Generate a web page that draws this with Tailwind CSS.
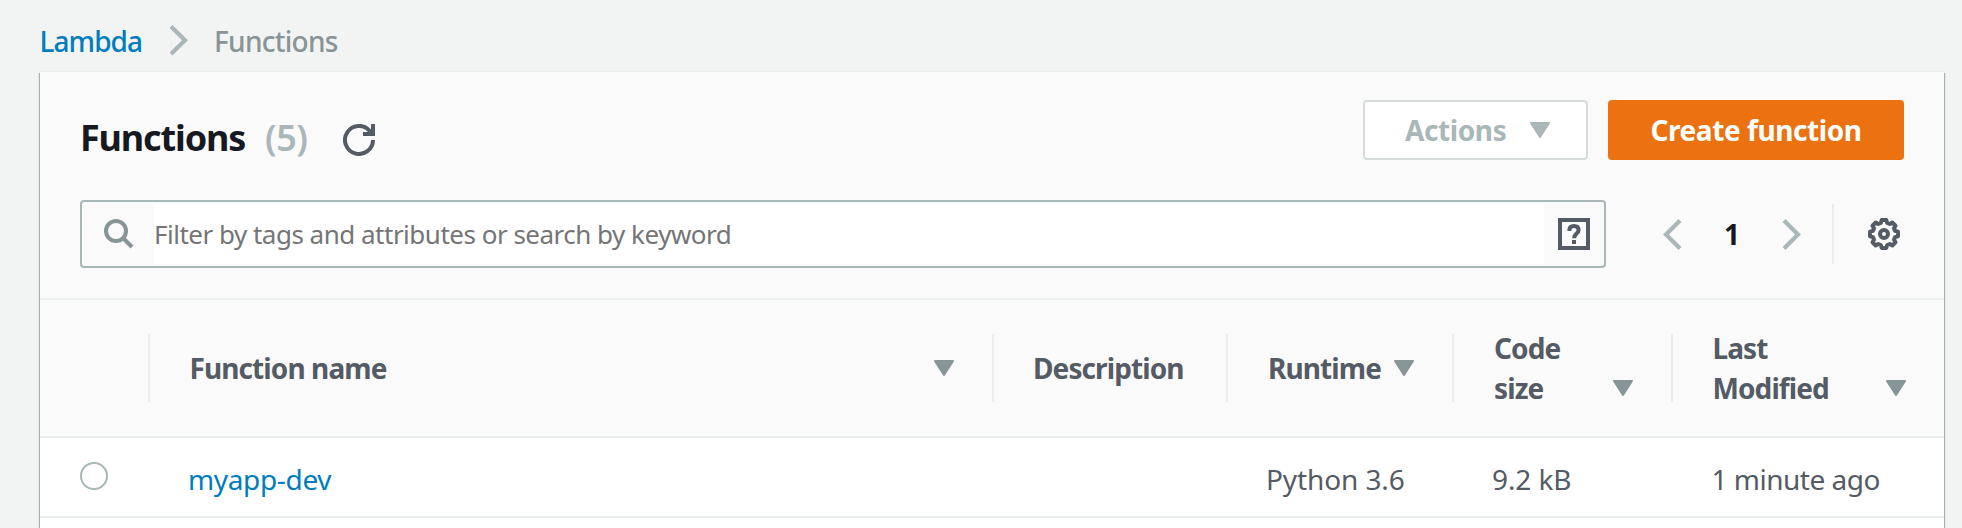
<!DOCTYPE html>
<html lang="en">
<head>
<meta charset="utf-8">
<title>Lambda Functions</title>
<script src="https://cdn.jsdelivr.net/npm/@tailwindcss/browser@4"></script>
</head>
<body class="h-[528px] overflow-hidden bg-[#f2f3f3] font-['Noto_Sans',sans-serif] text-[28px] leading-[40px] text-[#545b64]">
<div class="flex h-full flex-col">
  <nav class="flex h-[72px] shrink-0 items-start pl-[39.5px] pt-[21px] font-medium">
    <a class="w-[130px] tracking-[-0.95px] text-[#007dbc]">Lambda</a>
    <svg class="mt-[4px] h-[31px] w-5" viewBox="0 0 20 31" fill="none" stroke="#aab7b8" stroke-width="4.2"><path d="M1 1.5 15 15.2 1 29"/></svg>
    <span class="ml-[24.5px] tracking-[-0.72px] text-[#879596]">Functions</span>
  </nav>
  <main class="ml-10 w-[1904px] flex-1 bg-white shadow-[1px_1px_1px_0_rgba(0,28,36,0.3),-1px_1px_1px_0_rgba(0,28,36,0.3),0_-1px_0_0_#eaeded]">
    <section class="h-[226px] bg-[#fafafa]">
      <header class="flex h-[128px] items-start justify-between pl-10 pr-10 pt-7">
        <div class="flex h-[76px] items-center text-[36px]">
          <h1 class="w-[185px] font-bold tracking-[-1.15px] text-[#16191f]">Functions</h1>
          <span class="w-[78px] font-semibold tracking-[-0.5px] text-[#aab7b8]">(5)</span>
          <svg class="mt-[4px] h-8 w-8" viewBox="0 0 32 32" fill="none" stroke="#545b64" stroke-width="4"><path d="M30 16A14 14 0 1 1 26.5 6.7L30 10M30 0V10H20"/></svg>
        </div>
        <div class="flex gap-5 font-bold">
          <button class="flex h-[60px] w-[225px] items-center rounded-[4px] border-2 border-[#d5dbdb] bg-white pl-10 text-[#aab7b8]"><span class="w-[125px] text-left tracking-[-0.4px]">Actions</span>
            <svg class="h-4 w-5" viewBox="0 0 20 16" fill="#aab7b8" stroke="#aab7b8" stroke-width="2" stroke-linejoin="round"><path d="M1 1H19L10 15Z"/></svg>
          </button>
          <button class="h-[60px] w-[296px] rounded-[4px] bg-[#ec7211] text-center tracking-[-0.42px] text-white">Create function</button>
        </div>
      </header>
      <div class="flex h-[68px] items-center pl-10">
        <div class="flex h-[68px] w-[1526px] items-center rounded-[4px] border-2 border-[#aab7b8]">
          <span class="flex h-full w-[72px] items-center pl-[22px]"><svg class="h-[30px] w-[30px]" viewBox="0 0 30 30" fill="none" stroke="#879596" stroke-width="4"><circle cx="12" cy="12" r="10"/><path d="M19 19 28 28"/></svg></span>
          <span class="h-[60px] w-[1390px] bg-white text-[26px] leading-[60px] tracking-[-0.5px] text-[#757575]">Filter by tags and attributes or search by keyword</span>
          <svg class="ml-[14px] h-8 w-8" viewBox="0 0 32 32" fill="none" stroke="#545b64" stroke-width="4"><rect x="2" y="2" width="28" height="28"/><path d="M11.4 13V12C11.4 9.2 13.2 8 16 8S20.6 9.5 20.6 12C20.6 15.6 16.1 15.5 16.1 20.3"/><path d="M16 22V26"/></svg>
        </div>
        <svg class="ml-[56px] h-[31px] w-5" viewBox="0 0 20 31" fill="none" stroke="#aab7b8" stroke-width="4.2"><path d="M18 1.5 4 15.5 18 29.5"/></svg>
        <span class="ml-[34px] w-[66px] pl-[8px] font-bold text-[#16191f]">1</span>
        <svg class="h-[31px] w-5" viewBox="0 0 20 31" fill="none" stroke="#aab7b8" stroke-width="4.2"><path d="M2 1.5 16 15.5 2 29.5"/></svg>
        <span class="ml-[30px] h-[60px] w-[2px] bg-[#eaeded]"></span>
        <svg class="ml-[34px] h-8 w-8" viewBox="0 0 32 32" fill="none" stroke="#545b64" stroke-width="4" stroke-linejoin="round"><path d="M13.7 2H18.3L19.2 5L21.7 6L24.3 4.5L27.5 7.7L26 10.3L27 12.8L30 13.7V18.3L27 19.2L26 21.7L27.5 24.3L24.3 27.5L21.7 26L19.2 27L18.3 30H13.7L12.8 27L10.3 26L7.7 27.5L4.5 24.3L6 21.7L5 19.2L2 18.3V13.7L5 12.8L6 10.3L4.5 7.7L7.7 4.5L10.3 6L12.8 5Z"/><circle cx="16" cy="16" r="4"/></svg>
      </div>
    </section>
    <div class="grid h-[140px] grid-cols-[110px_844px_234px_226px_219px_271px] items-center border-y-2 border-[#eaeded] bg-[#fafafa] font-bold tracking-[-0.9px]">
      <div class="h-[68px] border-r-2 border-[#eaeded]"></div>
      <div class="flex h-[68px] items-center justify-between border-r-2 border-[#eaeded] pl-[39.5px] pr-[38.5px]">Function name
        <svg class="h-4 w-5" viewBox="0 0 20 16" fill="#879596" stroke="#879596" stroke-width="2" stroke-linejoin="round"><path d="M1 1H19L10 15Z"/></svg></div>
      <div class="flex h-[68px] items-center border-r-2 border-[#eaeded] pl-[39px]">Description</div>
      <div class="flex h-[68px] items-center justify-between border-r-2 border-[#eaeded] pl-10 pr-[38px]">Runtime
        <svg class="h-4 w-5" viewBox="0 0 20 16" fill="#879596" stroke="#879596" stroke-width="2" stroke-linejoin="round"><path d="M1 1H19L10 15Z"/></svg></div>
      <div class="flex h-[68px] items-center justify-between border-r-2 border-[#eaeded] pl-10 pr-[38px]"><span>Code<br>size</span>
        <svg class="mt-10 h-4 w-5" viewBox="0 0 20 16" fill="#879596" stroke="#879596" stroke-width="2" stroke-linejoin="round"><path d="M1 1H19L10 15Z"/></svg></div>
      <div class="flex h-[68px] items-center justify-between pl-[39.5px] pr-[38px]"><span>Last<br>Modified</span>
        <svg class="mt-10 h-4 w-5" viewBox="0 0 20 16" fill="#879596" stroke="#879596" stroke-width="2" stroke-linejoin="round"><path d="M1 1H19L10 15Z"/></svg></div>
    </div>
    <div class="grid h-[80px] grid-cols-[110px_844px_234px_226px_219px_271px] items-center border-b-2 border-[#eaeded] pt-[4px]">
      <div class="-mt-[6px] pl-10"><span class="block h-7 w-7 rounded-full border-2 border-[#aab7b8] bg-white"></span></div>
      <a class="pl-[38px] tracking-[-0.35px] text-[#007dbc]">myapp-dev</a>
      <span></span>
      <span class="pl-[38px] tracking-[-0.1px]">Python 3.6</span>
      <span class="pl-[38px] tracking-[-0.1px]">9.2 kB</span>
      <span class="pl-[38.5px] tracking-[-0.5px]">1 minute ago</span>
    </div>
  </main>
</div>
</body>
</html>
